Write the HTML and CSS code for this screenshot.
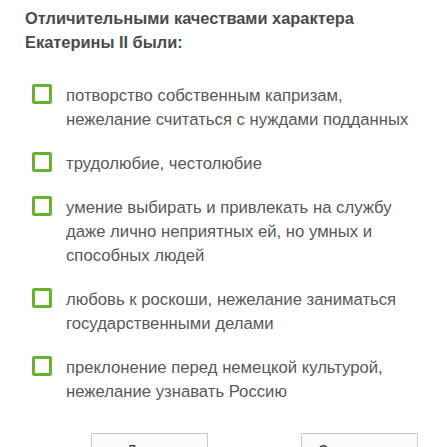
FILE: index.html
```html
<!DOCTYPE html>
<html lang="ru">
<head>
<meta charset="utf-8">
<link rel="stylesheet" href="styles.css">
</head>
<body>
<div class="quiz">
  <h1 class="question">Отличительными качествами характера Екатерины II были:</h1>
  <ul class="options">
    <li class="option"><span class="box"></span><span class="label">потворство собственным капризам, нежелание считаться с нуждами подданных</span></li>
    <li class="option"><span class="box"></span><span class="label">трудолюбие, честолюбие</span></li>
    <li class="option"><span class="box"></span><span class="label">умение выбирать и привлекать на службу даже лично неприятных ей, но умных и способных людей</span></li>
    <li class="option"><span class="box"></span><span class="label">любовь к роскоши, нежелание заниматься государственными делами</span></li>
    <li class="option"><span class="box"></span><span class="label">преклонение перед немецкой культурой, нежелание узнавать Россию</span></li>
  </ul>
  <div class="actions">
    <button class="btn">Далее</button>
    <button class="btn">Завершить</button>
  </div>
</div>
</body>
</html>
```
FILE: styles.css
```css
html, body {
  margin: 0;
  padding: 0;
  background: #ffffff;
}
.quiz {
  padding: 6px 0 0 25px;
  font-family: "Liberation Sans", Arial, sans-serif;
}
.question {
  margin: 0;
  font-size: 16.4px;
  font-weight: bold;
  line-height: 24px;
  color: #474b50;
  width: 370px;
}
.options {
  list-style: none;
  margin: 30px 0 0 0;
  padding: 0;
}
.option {
  display: flex;
  gap: 14px;
  align-items: flex-start;
  margin-bottom: 20px;
  padding-left: 7px;
}
.box {
  flex: none;
  box-sizing: border-box;
  width: 20px;
  height: 20px;
  border: 3px solid #68b232;
  border-radius: 2px;
}
.label {
  font-size: 16.7px;
  line-height: 24px;
  color: #58595c;
  width: 352px;
}
.actions {
  display: flex;
  gap: 93px;
  padding: 9px 0 0 66px;
}
.btn {
  flex: none;
  box-sizing: border-box;
  width: 117px;
  height: 32px;
  margin: 0;
  border: 1px solid #cacaca;
  border-radius: 0;
  background: linear-gradient(#ffffff, #f2f2f2);
  font-family: "Liberation Sans", Arial, sans-serif;
  font-size: 16px;
  line-height: 18px;
  color: #333333;
  padding: 6px 0 0;
  text-align: center;
  vertical-align: top;
}
```
